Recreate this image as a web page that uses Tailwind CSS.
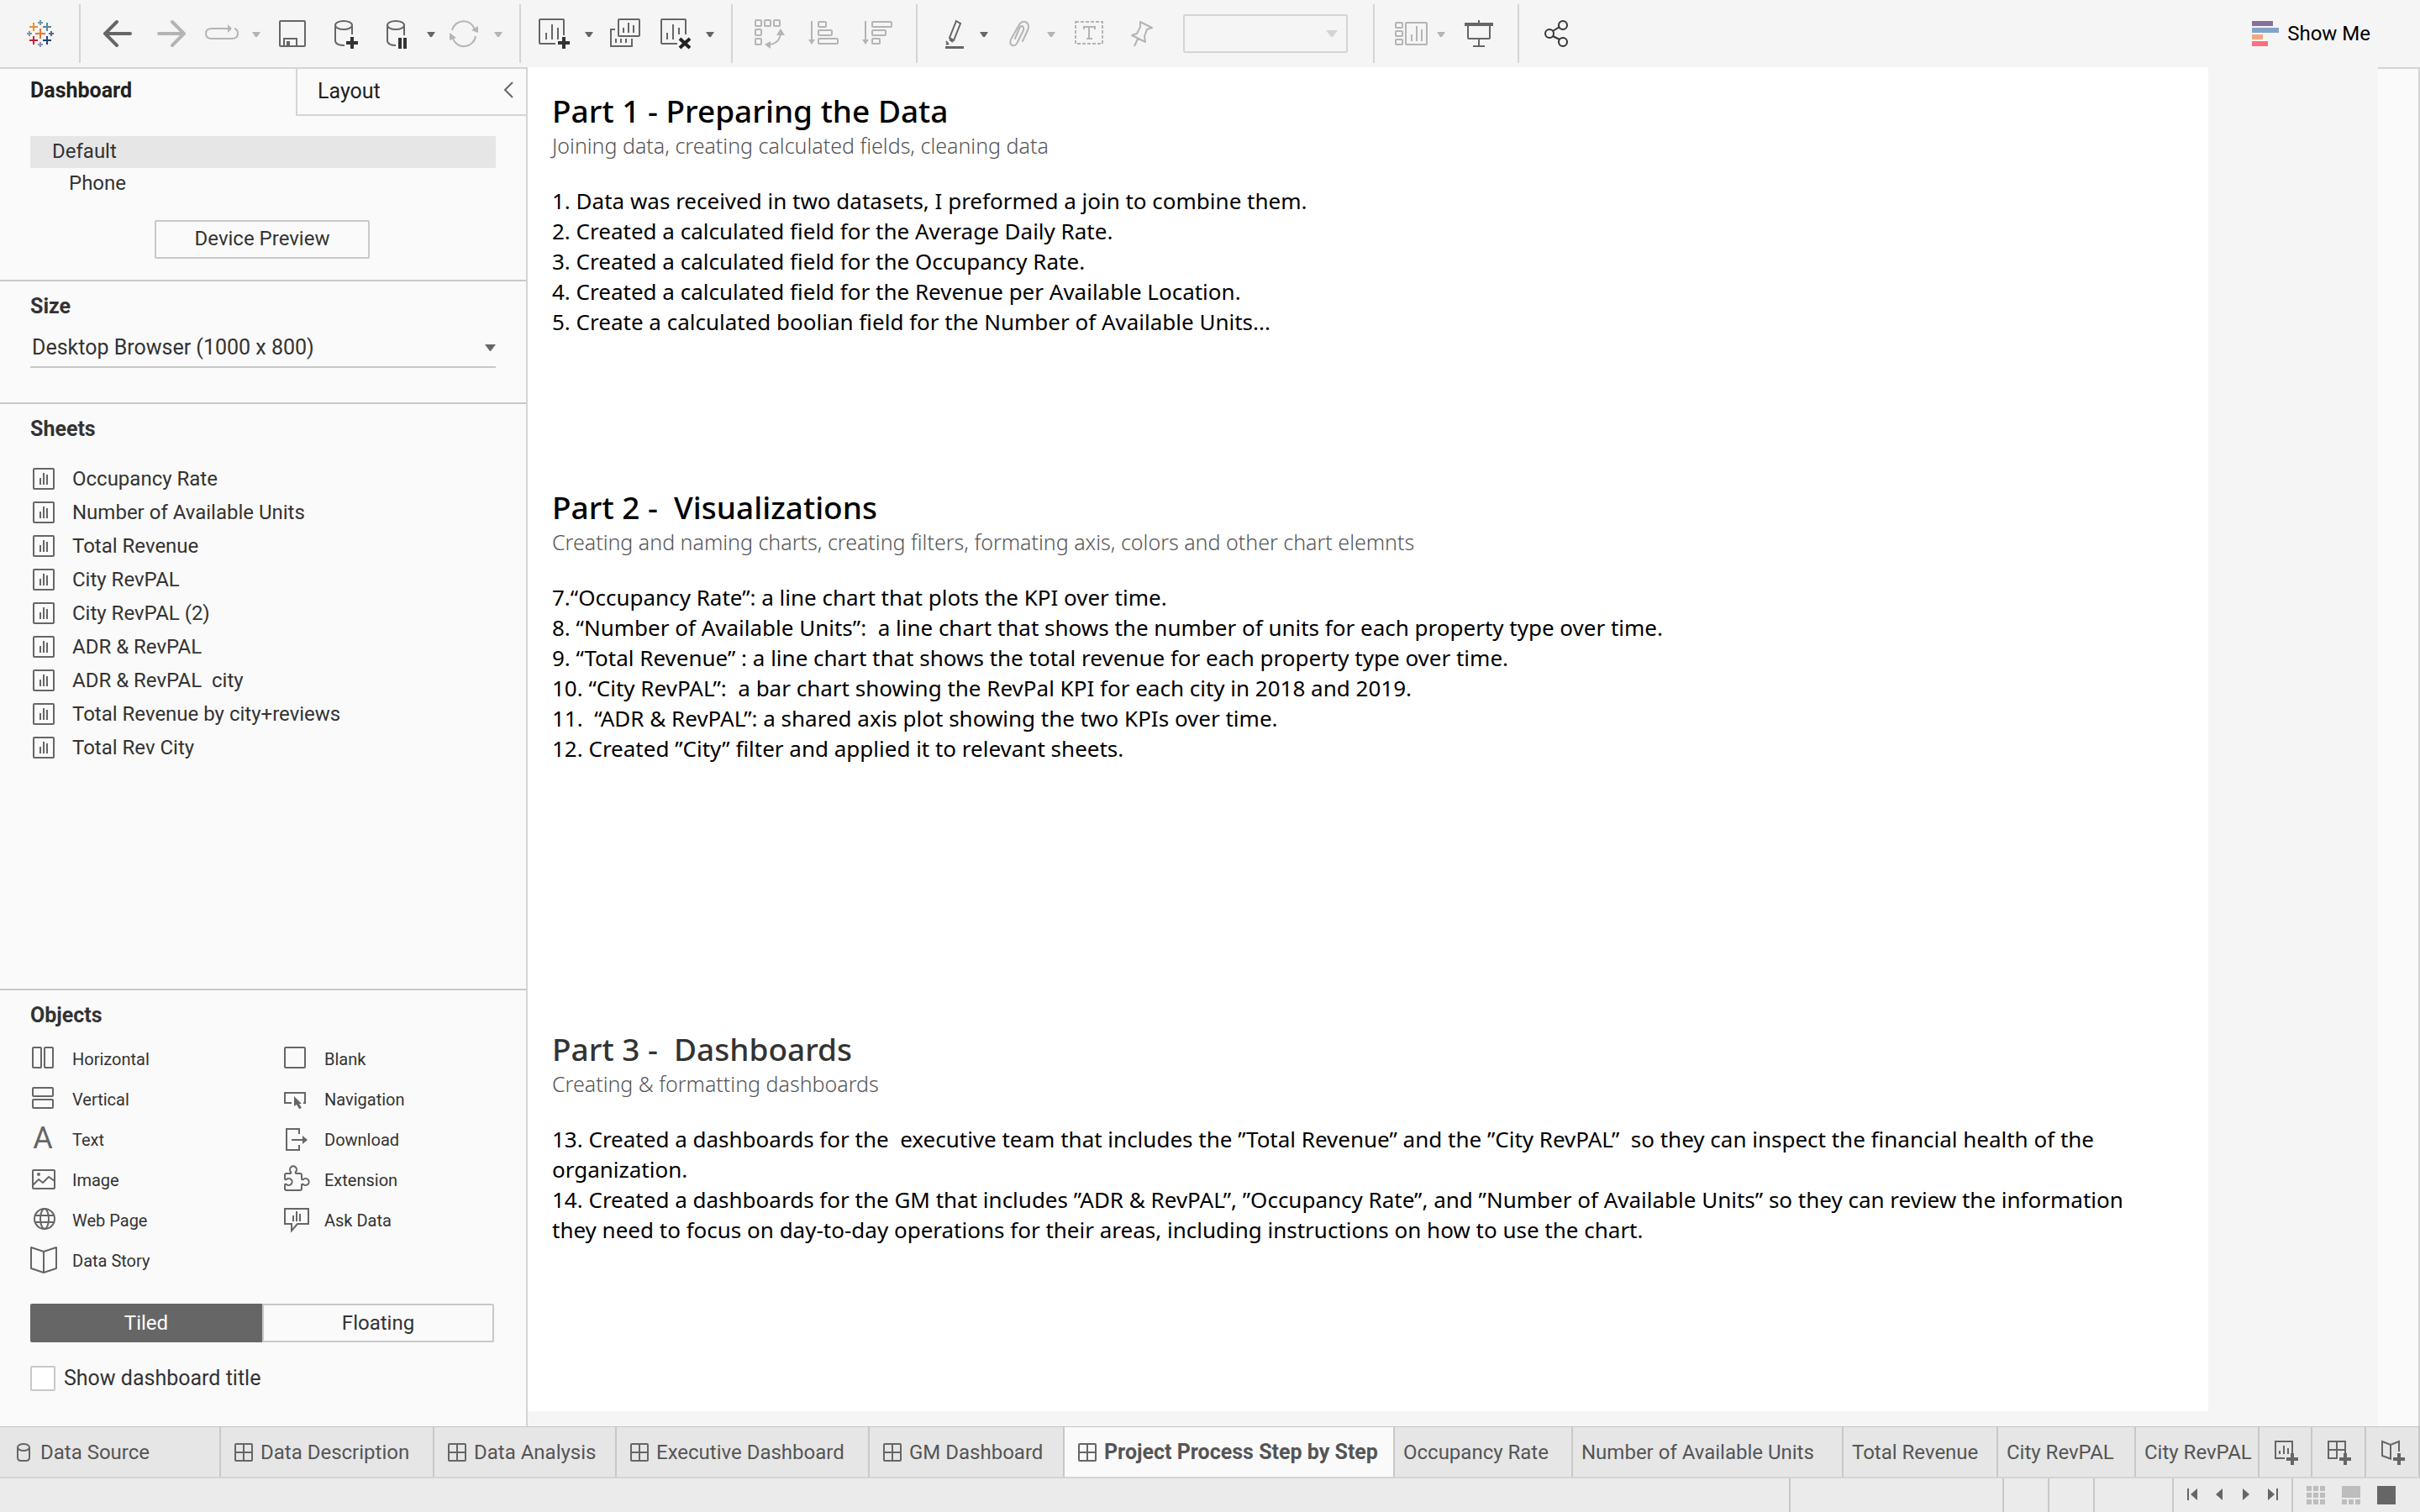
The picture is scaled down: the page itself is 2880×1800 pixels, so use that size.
<!DOCTYPE html>
<html lang="en">
<head>
<meta charset="utf-8">
<title>Project Process Step by Step</title>
<script src="https://cdn.jsdelivr.net/npm/@tailwindcss/browser@4"></script>
</head>
<body class="flex min-h-screen flex-col bg-[#f5f5f5] font-['Roboto',sans-serif] text-2xl text-[#333]">

<svg class="hidden" aria-hidden="true">
  <symbol id="sheet" viewBox="0 0 26 26"><rect x="1" y="1" width="24" height="24" rx="1" fill="none" stroke="#666" stroke-width="2"/><path d="M9 12v8M13 6v14M17 8v12" stroke="#666" stroke-width="2"/></symbol>
  <symbol id="grid" viewBox="0 0 22 22"><rect x="1" y="1" width="20" height="20" rx="1" fill="none" stroke="#666" stroke-width="2"/><path d="M11 1v20M1 11h20" stroke="#666" stroke-width="2"/></symbol>
  <symbol id="caret" viewBox="0 0 10 6"><path d="M0 0h10L6 6H4z" fill="currentColor"/></symbol>
</svg>

<header class="flex h-20 items-center">
  <button aria-label="Start page" class="ml-8"><svg class="h-10 w-8" viewBox="0 0 32 40" fill="none" stroke-width="2">
    <path d="M16 4v6M13 7h6" stroke="#7099a5"/><path d="M8 7v10M3 12h10" stroke="#eb912c"/><path d="M24 7v10M19 12h10" stroke="#59879b"/>
    <path d="M3 17v6M0 20h6" stroke="#7099a5"/><path d="M16 14v12M10 20h12" stroke="#e8762d"/><path d="M29 17v6M26 20h6" stroke="#5b6591"/>
    <path d="M8 23v10M3 28h10" stroke="#c72035"/><path d="M24 23v10M19 28h10" stroke="#1f447c"/><path d="M16 30v6M13 33h6" stroke="#8b91b5"/></svg></button>
  <div class="ml-[30px] h-[70px] w-[2px] bg-[#d4d4d4]"></div>
  <button aria-label="Back" class="ml-[27px]"><svg class="h-10 w-[34px]" viewBox="0 0 34 40" fill="none" stroke="#666" stroke-width="4" stroke-linecap="round"><path d="M32 20H3M16 6L2 20l14 14"/></svg></button>
  <button aria-label="Forward" class="ml-[30px]"><svg class="h-10 w-[34px]" viewBox="0 0 34 40" fill="none" stroke="#b4b4b4" stroke-width="4" stroke-linecap="round"><path d="M2 20h29M18 6l14 14-14 14"/></svg></button>
  <button aria-label="Replay" class="ml-[23px]"><svg class="h-10 w-10" viewBox="0 0 40 40" fill="none" stroke="#b4b4b4" stroke-width="2"><path d="M28 14H8q-7 0-7 6t7 6h24q7 0 7-6 0-5-4-6"/><path d="M27 9l5 5-5 5z" fill="#b4b4b4" stroke="none"/></svg></button>
  <button aria-label="Replay options" class="ml-4 text-[#b4b4b4]"><svg class="mt-[2px] h-[6px] w-[10px]"><use href="#caret"/></svg></button>
  <button aria-label="Save" class="ml-[22px]"><svg class="h-10 w-8" viewBox="0 0 32 40" fill="none" stroke="#666" stroke-width="2"><rect x="1" y="5" width="30" height="30" rx="1"/><path d="M6 35v-9h15v9"/><path d="M9 29h4v6H9z" fill="#666" stroke="none"/></svg></button>
  <button aria-label="New data source" class="ml-[34px]"><svg class="h-10 w-7" viewBox="0 0 28 40" fill="none" stroke="#666" stroke-width="2"><ellipse cx="11" cy="10" rx="10" ry="5"/><path d="M1 10v19q1 5 11 5M21 10v11"/><path d="M14 31h14M21 24v14" stroke="#333" stroke-width="4"/></svg></button>
  <button aria-label="Pause updates" class="ml-[34px]"><svg class="h-10 w-[25px]" viewBox="0 0 25 40" fill="none" stroke="#666" stroke-width="2"><ellipse cx="11" cy="10" rx="10" ry="5"/><path d="M1 10v19q1 5 10 5M21 10v12"/><path d="M16 25v13M22 25v13" stroke="#333" stroke-width="4"/></svg></button>
  <button aria-label="Update options" class="ml-[23px] text-[#666]"><svg class="mt-[2px] h-[6px] w-[10px]"><use href="#caret"/></svg></button>
  <button aria-label="Run update" class="ml-[17px]"><svg class="h-10 w-[34px]" viewBox="0 0 34 40" fill="none" stroke="#b4b4b4" stroke-width="2"><path d="M3 16a14 14 0 0 1 27-1M31 23a14 14 0 0 1-27 3"/><path d="M26 16l8 3V11zM0 19l8 6-8 3z" fill="#b4b4b4" stroke="none"/></svg></button>
  <button aria-label="Run options" class="ml-[19px] text-[#b4b4b4]"><svg class="mt-[2px] h-[6px] w-[10px]"><use href="#caret"/></svg></button>
  <div class="ml-5 h-[70px] w-[2px] bg-[#d4d4d4]"></div>
  <button aria-label="New worksheet" class="ml-[21px]"><svg class="h-10 w-[37px]" viewBox="0 0 37 40" fill="none" stroke="#666" stroke-width="2"><path d="M20 32H2q-1 0-1-1V4q0-1 1-1h27q1 0 1 1v18M9 19v8M16 9v18M23 13v14"/><path d="M23 31h14M30 24v14" stroke="#333" stroke-width="4"/></svg></button>
  <button aria-label="New options" class="ml-[18px] text-[#666]"><svg class="mt-[2px] h-[6px] w-[10px]"><use href="#caret"/></svg></button>
  <button aria-label="Duplicate" class="ml-5"><svg class="h-10 w-9" viewBox="0 0 36 40" fill="none" stroke="#666" stroke-width="2"><rect x="10" y="3" width="25" height="20" rx="1"/><path d="M6 15H1v20h25v-9M16 13v6M22 7v12M28 10v9M7 26v5M13 26v5M19 26v5"/></svg></button>
  <button aria-label="Clear sheet" class="ml-6"><svg class="h-10 w-9" viewBox="0 0 36 40" fill="none" stroke="#666" stroke-width="2"><path d="M20 32H2q-1 0-1-1V4q0-1 1-1h27q1 0 1 1v17M8 19v8M15 9v18M22 13v8"/><path d="M23 26l12 11M35 26L23 37" stroke="#222" stroke-width="4"/></svg></button>
  <button aria-label="Clear options" class="ml-[18px] text-[#666]"><svg class="mt-[2px] h-[6px] w-[10px]"><use href="#caret"/></svg></button>
  <div class="ml-5 h-[70px] w-[2px] bg-[#d4d4d4]"></div>
  <button aria-label="Swap rows and columns" class="ml-[26px]"><svg class="h-10 w-[36px]" viewBox="0 0 36 40" fill="none" stroke="#b4b4b4" stroke-width="2"><rect x="1" y="4" width="7" height="7" rx="1"/><rect x="12" y="4" width="7" height="7" rx="1"/><rect x="23" y="4" width="7" height="7" rx="1"/><rect x="1" y="15" width="7" height="7" rx="1"/><rect x="1" y="26" width="7" height="7" rx="1"/><path d="M17 33q13-1 14-14"/><path d="M12 33l7-4v9zM31 14l5 8H26z" fill="#b4b4b4" stroke="none"/></svg></button>
  <button aria-label="Sort ascending" class="ml-7"><svg class="h-10 w-9" viewBox="0 0 36 40" fill="none" stroke="#b4b4b4" stroke-width="2"><path d="M4 5v24"/><path d="M0 27h8l-4 6z" fill="#b4b4b4" stroke="none"/><rect x="12" y="6" width="9" height="6" rx="1"/><rect x="12" y="16" width="16" height="6" rx="1"/><rect x="12" y="26" width="23" height="6" rx="1"/></svg></button>
  <button aria-label="Sort descending" class="ml-7"><svg class="h-10 w-9" viewBox="0 0 36 40" fill="none" stroke="#b4b4b4" stroke-width="2"><path d="M4 5v24"/><path d="M0 27h8l-4 6z" fill="#b4b4b4" stroke="none"/><rect x="12" y="6" width="23" height="6" rx="1"/><rect x="12" y="16" width="16" height="6" rx="1"/><rect x="12" y="26" width="9" height="6" rx="1"/></svg></button>
  <div class="ml-7 h-[70px] w-[2px] bg-[#d4d4d4]"></div>
  <button aria-label="Highlight" class="ml-[33px]"><svg class="h-10 w-[22px]" viewBox="0 0 22 40" fill="none" stroke="#666" stroke-width="2"><path d="M13 5l5 3-8 20-5-3zM5 27l4 3M1 29l3 4M1 33l2-1"/><path d="M0 36.500h22" stroke-width="3"/></svg></button>
  <button aria-label="Highlight options" class="ml-[19px] text-[#666]"><svg class="mt-[2px] h-[6px] w-[10px]"><use href="#caret"/></svg></button>
  <button aria-label="Group members" class="ml-[25px]"><svg class="h-10 w-6" viewBox="0 0 24 40" fill="none" stroke="#b4b4b4" stroke-width="2" stroke-linecap="round" stroke-linejoin="round"><path d="M16 29l6-13q3-8-3-10-5-1-8 5L2 27q-2 6 2 7 4 1 6-4l7-14q1-4-2-5-2 0-3 3L7 26"/></svg></button>
  <button aria-label="Group options" class="ml-[21px] text-[#b4b4b4]"><svg class="mt-[2px] h-[6px] w-[10px]"><use href="#caret"/></svg></button>
  <button aria-label="Show mark labels" class="ml-[23px]"><svg class="h-10 w-[34px]" viewBox="0 0 34 40" fill="none" stroke="#b4b4b4" stroke-width="2"><rect x="1" y="6" width="32" height="26" stroke-dasharray="4 2"/><path d="M11 15v-3h13v3M17 12v14M14 26h7"/></svg></button>
  <button aria-label="Fix axes" class="ml-[33px]"><svg class="h-10 w-[26px]" viewBox="0 0 26 40" fill="none" stroke="#b4b4b4" stroke-width="2" stroke-linejoin="round"><path d="M11 6l14 7-6 2-3 8 1 7L1 22l6-2 4-8zM8 26L4 35"/></svg></button>
  <select aria-label="Fit" class="ml-9 h-[46px] w-[196px] appearance-none rounded-[2px] border-2 border-[#d4d4d4]"></select>
  <svg class="-ml-[26px] h-2 w-[14px]" viewBox="0 0 14 8"><path d="M0 0h14L8 8H6z" fill="#d4d4d4"/></svg>
  <div class="ml-[42px] h-[70px] w-[2px] bg-[#d4d4d4]"></div>
  <button aria-label="Show cards" class="ml-6"><svg class="h-10 w-[39px]" viewBox="0 0 39 40" fill="none" stroke="#b4b4b4" stroke-width="2"><rect x="1" y="7" width="8" height="6" rx="1"/><rect x="1" y="17" width="8" height="6" rx="1"/><rect x="1" y="27" width="8" height="6" rx="1"/><rect x="13" y="7" width="25" height="26" rx="1"/><path d="M20 21v8M26 11v18M32 15v14"/></svg></button>
  <button aria-label="Card options" class="ml-[11px] text-[#b4b4b4]"><svg class="mt-[2px] h-[6px] w-[10px]"><use href="#caret"/></svg></button>
  <button aria-label="Presentation mode" class="ml-[23px]"><svg class="h-10 w-[34px]" viewBox="0 0 34 40" fill="none" stroke="#666" stroke-width="2"><path d="M17 4v4M4 10v15q0 1 1 1h24q1 0 1-1V10M17 26v9M10 35h14"/><path d="M0 9h34" stroke-width="4"/></svg></button>
  <div class="ml-[29px] h-[70px] w-[2px] bg-[#d4d4d4]"></div>
  <button aria-label="Share" class="ml-[30px]"><svg class="h-10 w-7" viewBox="0 0 28 40" fill="none" stroke="#333" stroke-width="2"><circle cx="6" cy="20" r="5"/><circle cx="22" cy="10" r="5"/><circle cx="22" cy="30" r="5"/><path d="M10 17l8-5M10 23l8 4"/></svg></button>
  <button class="mr-[59px] ml-auto flex items-center gap-[10px] text-black"><svg class="h-[30px] w-8" viewBox="0 0 32 30"><path d="M0 0h25v6H0z" fill="#867097"/><path d="M0 8h32v6H0z" fill="#82a4cb"/><path d="M0 16h13v6H0z" fill="#f2a67f"/><path d="M0 24h19v6H0z" fill="#fa7080"/></svg>Show Me</button>
</header>

<div class="flex flex-1">
  <aside class="flex w-[628px] shrink-0 flex-col border-t-2 border-r-2 border-[#d4d4d4] bg-[#fafafa]">
    <div class="flex h-14">
      <button class="w-[352px] pb-1 pl-9 text-left text-[25px] font-bold text-[#222]">Dashboard</button>
      <div class="flex flex-1 items-center justify-between border-b-2 border-l-2 border-[#d4d4d4] pr-[15px] pl-6">
        <button class="text-[25px] text-[#222]">Layout</button>
        <button aria-label="Collapse pane" class="pb-1"><svg class="h-5 w-3" viewBox="0 0 12 20" fill="none" stroke="#666" stroke-width="2"><path d="M11 1L2 10l9 9"/></svg></button>
      </div>
    </div>
    <div class="mx-9 mt-6 h-[38px] bg-[#e6e6e6] pl-[26px] leading-9">Default</div>
    <div class="mx-9 h-[38px] pl-[46px] leading-9">Phone</div>
    <button class="mt-6 ml-[184px] h-[46px] w-64 rounded-[2px] border-2 border-[#c8c8c8] pb-[2px]">Device Preview</button>

    <section class="mt-[25px] border-t-2 border-[#c8c8c8] px-9 pt-3 pb-[41px]">
      <h2 class="text-[25px] leading-9 font-bold"><label for="size">Size</label></h2>
      <div class="relative mt-[7px]">
        <select id="size" class="h-12 w-[554px] appearance-none border-b-2 border-[#c8c8c8] pt-[2px] pl-[2px] text-[25px]"><option>Desktop Browser (1000 x 800)</option></select>
        <svg class="pointer-events-none absolute top-5 left-[541px] h-2 w-[13px]" viewBox="0 0 13 8"><path d="M0 0h13L7 8H6z" fill="#666"/></svg>
      </div>
    </section>

    <section class="flex-1 border-t-2 border-[#c8c8c8] pt-3 pl-9">
      <h2 class="text-[25px] leading-9 font-bold">Sheets</h2>
      <ul class="mt-[21px] pl-[3px] leading-10">
        <li class="flex items-center gap-[21px]"><svg class="size-[26px]"><use href="#sheet"/></svg>Occupancy Rate</li>
        <li class="flex items-center gap-[21px]"><svg class="size-[26px]"><use href="#sheet"/></svg>Number of Available Units</li>
        <li class="flex items-center gap-[21px]"><svg class="size-[26px]"><use href="#sheet"/></svg>Total Revenue</li>
        <li class="flex items-center gap-[21px]"><svg class="size-[26px]"><use href="#sheet"/></svg>City RevPAL</li>
        <li class="flex items-center gap-[21px]"><svg class="size-[26px]"><use href="#sheet"/></svg>City RevPAL (2)</li>
        <li class="flex items-center gap-[21px]"><svg class="size-[26px]"><use href="#sheet"/></svg>ADR &amp; RevPAL</li>
        <li class="flex items-center gap-[21px]"><svg class="size-[26px]"><use href="#sheet"/></svg>ADR &amp; RevPAL&nbsp; city</li>
        <li class="flex items-center gap-[21px]"><svg class="size-[26px]"><use href="#sheet"/></svg>Total Revenue by city+reviews</li>
        <li class="flex items-center gap-[21px]"><svg class="size-[26px]"><use href="#sheet"/></svg>Total Rev City</li>
      </ul>
    </section>

    <section class="border-t-2 border-[#c8c8c8] pt-3 pb-[42px] pl-[34px]">
      <h2 class="pl-[2px] text-[25px] leading-9 font-bold">Objects</h2>
      <ul class="mt-[10px] grid grid-cols-[300px_1fr] text-xl leading-[48px]">
        <li class="flex items-center gap-4"><svg class="size-9" viewBox="0 0 36 36" fill="none" stroke="#666" stroke-width="2"><rect x="5" y="4" width="10" height="24" rx="1"/><rect x="19" y="4" width="10" height="24" rx="1"/></svg>Horizontal</li>
        <li class="flex items-center gap-4"><svg class="size-9" viewBox="0 0 36 36" fill="none" stroke="#666" stroke-width="2"><rect x="5" y="4" width="24" height="24" rx="1"/></svg>Blank</li>
        <li class="flex items-center gap-4"><svg class="size-9" viewBox="0 0 36 36" fill="none" stroke="#666" stroke-width="2"><rect x="5" y="4" width="24" height="10" rx="1"/><rect x="5" y="18" width="24" height="10" rx="1"/></svg>Vertical</li>
        <li class="flex items-center gap-4"><svg class="size-9" viewBox="0 0 36 36" fill="none" stroke="#666" stroke-width="2"><path d="M13 22H5V10h24v12h-2"/><path d="M16 14l9 9h-3l3 5-3 1-3-5-3 2z" fill="#666" stroke="none"/></svg>Navigation</li>
        <li class="flex items-center gap-4"><span aria-hidden="true" class="w-9 pr-[2px] pb-1 text-center text-[36px] leading-10 text-[#666]">A</span>Text</li>
        <li class="flex items-center gap-4"><svg class="size-9" viewBox="0 0 36 36" fill="none" stroke="#666" stroke-width="2"><path d="M22 11V5H7v25h15v-6M13 18h15"/><path d="M26 13l6 5-6 5z" fill="#666" stroke="none"/></svg>Download</li>
        <li class="flex items-center gap-4"><svg class="size-9" viewBox="0 0 36 36" fill="none" stroke="#666" stroke-width="2"><rect x="5" y="6" width="26" height="22" rx="1"/><path d="M5 24l7-7 5 4 7-7 7 5"/><circle cx="12" cy="11" r="2" fill="#666" stroke="none"/></svg>Image</li>
        <li class="flex items-center gap-4"><svg class="size-9" viewBox="0 0 36 36" fill="none" stroke="#666" stroke-width="2"><path d="M5 16v-4q0-2 2-2h4q2 0 1-2a4 4 0 1 1 6 0q-1 2 1 2h4q2 0 2 2v4q0 2 2 1a4 4 0 1 1 0 6q-2-1-2 1v4q0 2-2 2H7q-2 0-2-2v-4q0-2 2-1a4 4 0 1 0 0-6q-2 1-2-1z"/></svg>Extension</li>
        <li class="flex items-center gap-4"><svg class="size-9" viewBox="0 0 36 36" fill="none" stroke="#666" stroke-width="2"><circle cx="19" cy="16" r="12"/><ellipse cx="19" cy="16" rx="5" ry="12"/><path d="M8 12h22M8 20h22"/></svg>Web Page</li>
        <li class="flex items-center gap-4"><svg class="size-9" viewBox="0 0 36 36" fill="none" stroke="#666" stroke-width="2"><path d="M5 4h28v18H20l-7 8v-8H5zM15 12v7M19 7v12M23 10v9"/></svg>Ask Data</li>
        <li class="flex items-center gap-4"><svg class="size-9" viewBox="0 0 36 36" fill="none" stroke="#666" stroke-width="2" stroke-linejoin="round"><path d="M3 2l15 5 15-5v25l-15 5-15-5zM18 7v25"/></svg>Data Story</li>
      </ul>
      <div class="mt-[27px] ml-[2px] flex h-[46px] w-[552px]">
        <button class="w-1/2 rounded-l-[2px] bg-[#666] text-white">Tiled</button>
        <button class="w-1/2 rounded-r-[2px] border-2 border-[#c8c8c8]">Floating</button>
      </div>
      <div class="mt-7 ml-[2px] flex items-center gap-[10px]">
        <input id="show-title" type="checkbox" class="size-[30px] appearance-none rounded-[2px] border-2 border-[#c8c8c8] bg-white">
        <label for="show-title" class="text-[25px] leading-[30px]">Show dashboard title</label>
      </div>
    </section>
  </aside>

  <main class="mb-[18px] flex-1 bg-white pt-[29px] pl-[29px] font-['Noto_Sans','Roboto',sans-serif] text-[26px] leading-9 text-black">
    <section class="min-h-[472px]">
      <h1 class="text-[37px] leading-[46px] font-medium">Part 1 - Preparing the Data</h1>
      <p class="text-[25px] font-light text-[#555]">Joining data, creating calculated fields, cleaning data</p>
      <div class="mt-[30px]">
        <p>1. Data was received in two datasets, I preformed a join to combine them.</p>
        <p>2. Created a calculated field for the Average Daily Rate.</p>
        <p>3. Created a calculated field for the Occupancy Rate.</p>
        <p>4. Created a calculated field for the Revenue per Available Location.</p>
        <p>5. Create a calculated boolian field for the Number of Available Units...</p>
      </div>
    </section>
    <section class="min-h-[645px]">
      <h1 class="text-[37px] leading-[46px] font-medium">Part 2 -&nbsp; Visualizations</h1>
      <p class="text-[25px] font-light text-[#555]">Creating and naming charts, creating filters, formating axis, colors and other chart elemnts</p>
      <div class="mt-[30px]">
        <p>7.“Occupancy Rate”: a line chart that plots the KPI over time.</p>
        <p>8. “Number of Available Units”:&nbsp; a line chart that shows the number of units for each property type over time.</p>
        <p>9. “Total Revenue” : a line chart that shows the total revenue for each property type over time.</p>
        <p>10. “City RevPAL”:&nbsp; a bar chart showing the RevPal KPI for each city in 2018 and 2019.</p>
        <p>11.&nbsp; “ADR &amp; RevPAL”: a shared axis plot showing the two KPIs over time.</p>
        <p>12. Created ”City” filter and applied it to relevant sheets.</p>
      </div>
    </section>
    <section>
      <h1 class="text-[37px] leading-[46px] font-medium text-[#333]">Part 3 -&nbsp; Dashboards</h1>
      <p class="text-[25px] font-light text-[#555]">Creating &amp; formatting dashboards</p>
      <div class="mt-[30px]">
        <p>13. Created a dashboards for the&nbsp; executive team that includes the ”Total Revenue” and the ”City RevPAL”&nbsp; so they can inspect the financial health of the<br>organization.</p>
        <p>14. Created a dashboards for the GM that includes ”ADR &amp; RevPAL”, ”Occupancy Rate”, and ”Number of Available Units” so they can review the information<br>they need to focus on day-to-day operations for their areas, including instructions on how to use the chart.</p>
      </div>
    </section>
  </main>
  <div class="ml-[202px] w-[50px] shrink-0 border-t-2 border-r-2 border-[#d4d4d4] bg-[#fafafa]"></div>
</div>

<nav class="flex h-[62px] border-t border-b-2 border-t-[#c4c4c4] border-b-[#d4d4d4] bg-[#e6e6e6] whitespace-nowrap text-[#555]">
  <div class="flex min-w-0 flex-1 overflow-hidden">
    <a href="#" class="flex w-[263px] shrink-0 items-center gap-3 border-r-2 border-[#c8c8c8] pl-5"><svg class="h-[22px] w-4" viewBox="0 0 16 22" fill="none" stroke="#666" stroke-width="2"><ellipse cx="8" cy="5" rx="7" ry="4"/><path d="M1 5v12q0 4 4 4h6q4 0 4-4V5"/></svg>Data Source</a>
    <a href="#" class="flex w-[254px] shrink-0 items-center gap-[9px] border-r-2 border-[#c8c8c8] pl-4"><svg class="size-[22px]"><use href="#grid"/></svg>Data Description</a>
    <a href="#" class="flex w-[217px] shrink-0 items-center gap-[9px] border-r-2 border-[#c8c8c8] pl-4"><svg class="size-[22px]"><use href="#grid"/></svg>Data Analysis</a>
    <a href="#" class="flex w-[301px] shrink-0 items-center gap-[9px] border-r-2 border-[#c8c8c8] pl-4"><svg class="size-[22px]"><use href="#grid"/></svg>Executive Dashboard</a>
    <a href="#" class="flex w-[232px] shrink-0 items-center gap-[9px] border-r-2 border-[#c8c8c8] pl-4"><svg class="size-[22px]"><use href="#grid"/></svg>GM Dashboard</a>
    <a href="#" aria-current="page" class="flex w-[393px] shrink-0 items-center gap-[9px] border-r-2 border-[#c8c8c8] bg-[#fafafa] pl-4 text-[25px] font-bold"><svg class="size-[22px]"><use href="#grid"/></svg>Project Process Step by Step</a>
    <a href="#" class="flex w-[212px] shrink-0 items-center border-r-2 border-[#c8c8c8] pl-[10px]">Occupancy Rate</a>
    <a href="#" class="flex w-[322px] shrink-0 items-center border-r-2 border-[#c8c8c8] pl-[10px]">Number of Available Units</a>
    <a href="#" class="flex w-[184px] shrink-0 items-center border-r-2 border-[#c8c8c8] pl-[10px]">Total Revenue</a>
    <a href="#" class="flex w-[164px] shrink-0 items-center border-r-2 border-[#c8c8c8] pl-[10px]">City RevPAL</a>
    <a href="#" class="flex min-w-0 flex-1 items-center pl-[10px]">City RevPAL</a>
  </div>
  <button aria-label="New worksheet" class="w-[65px] shrink-0 border-x-2 border-[#c8c8c8] pl-[17px]"><svg class="h-[30px] w-[30px]" viewBox="0 0 30 30" fill="none" stroke="#666" stroke-width="2"><path d="M13 22H2V2h20v14M7 13v4M12 7v10M17 10v7"/><path d="M15 23h14M22 16v14" stroke-width="4"/></svg></button>
  <button aria-label="New dashboard" class="w-16 shrink-0 border-r-2 border-[#c8c8c8] pl-[17px]"><svg class="h-[30px] w-[30px]" viewBox="0 0 30 30" fill="none" stroke="#666" stroke-width="2"><path d="M13 22H2V2h20v14M12 2v20M2 12h20"/><path d="M15 23h14M22 16v14" stroke-width="4"/></svg></button>
  <button aria-label="New story" class="w-16 shrink-0 border-r-2 border-[#c8c8c8] pl-[17px]"><svg class="h-[30px] w-[30px]" viewBox="0 0 30 30" fill="none" stroke="#666" stroke-width="2"><path d="M13 23L2 19V2l10 4 10-4v12M12 6v17"/><path d="M15 23h14M22 16v14" stroke-width="4"/></svg></button>
</nav>

<footer class="flex h-10 items-center justify-end bg-[#ebebeb] text-[#666]">
  <div class="h-full w-[254px] border-l-2 border-[#c8c8c8]"></div>
  <div class="h-full w-[54px] border-l-2 border-[#c8c8c8]"></div>
  <div class="h-full w-[54px] border-l-2 border-[#c8c8c8]"></div>
  <div class="h-full w-[94px] border-l-2 border-[#c8c8c8]"></div>
  <div class="flex h-full w-[142px] items-center border-l-2 border-[#c8c8c8] pb-[2px] pl-4">
    <button aria-label="First"><svg class="h-[14px] w-3" viewBox="0 0 12 14" fill="currentColor"><path d="M0 0h2v14H0zM12 0v14L4 7z"/></svg></button>
    <button aria-label="Previous" class="ml-[22px]"><svg class="h-[14px] w-2" viewBox="0 0 8 14" fill="currentColor"><path d="M8 0v14L0 7z"/></svg></button>
    <button aria-label="Next" class="ml-6"><svg class="h-[14px] w-2" viewBox="0 0 8 14" fill="currentColor"><path d="M0 0v14l8-7z"/></svg></button>
    <button aria-label="Last" class="ml-[22px]"><svg class="h-[14px] w-3" viewBox="0 0 12 14" fill="currentColor"><path d="M10 0h2v14h-2zM0 0v14l8-7z"/></svg></button>
  </div>
  <div class="flex h-full w-[153px] items-center gap-5 border-l-2 border-[#c8c8c8] pl-4">
    <button aria-label="Sheet sorter"><svg class="size-[22px]" viewBox="0 0 22 22" fill="#bdbdbd"><path d="M0 0h6v6H0zM8 0h6v6H8zM16 0h6v6h-6zM0 8h6v6H0zM8 8h6v6H8zM16 8h6v6h-6zM0 16h6v6H0zM8 16h6v6H8zM16 16h6v6h-6z"/></svg></button>
    <button aria-label="Filmstrip"><svg class="size-[22px]" viewBox="0 0 22 22" fill="#bdbdbd"><path d="M0 0h22v14H0zM0 16h6v6H0zM8 16h6v6H8zM16 16h6v6h-6z"/></svg></button>
    <button aria-label="Tabs"><svg class="size-[22px]" viewBox="0 0 22 22" fill="currentColor"><path d="M0 0h22v22H0z"/></svg></button>
  </div>
</footer>
</body>
</html>
